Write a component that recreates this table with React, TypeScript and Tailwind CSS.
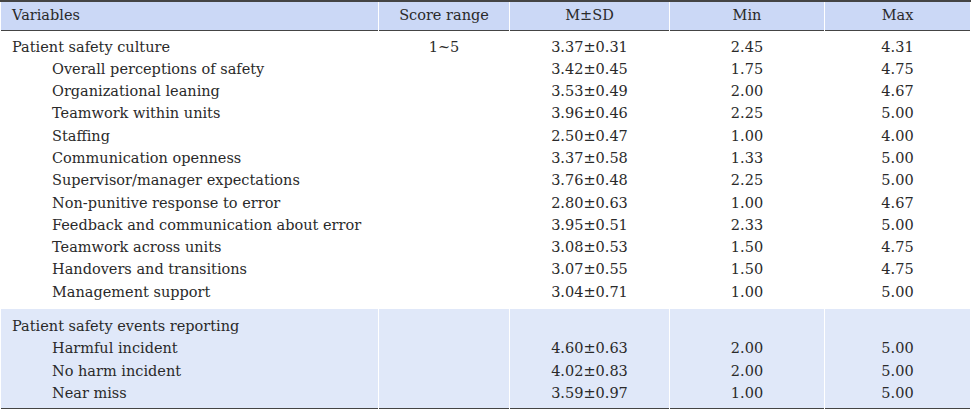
import React from "react";

type Row = { label: string; sub?: boolean; range?: string; msd?: string; min?: string; max?: string };

const culture: Row[] = [
  { label: "Patient safety culture", range: "1~5", msd: "3.37±0.31", min: "2.45", max: "4.31" },
  { label: "Overall perceptions of safety", sub: true, msd: "3.42±0.45", min: "1.75", max: "4.75" },
  { label: "Organizational leaning", sub: true, msd: "3.53±0.49", min: "2.00", max: "4.67" },
  { label: "Teamwork within units", sub: true, msd: "3.96±0.46", min: "2.25", max: "5.00" },
  { label: "Staffing", sub: true, msd: "2.50±0.47", min: "1.00", max: "4.00" },
  { label: "Communication openness", sub: true, msd: "3.37±0.58", min: "1.33", max: "5.00" },
  { label: "Supervisor/manager expectations", sub: true, msd: "3.76±0.48", min: "2.25", max: "5.00" },
  { label: "Non-punitive response to error", sub: true, msd: "2.80±0.63", min: "1.00", max: "4.67" },
  { label: "Feedback and communication about error", sub: true, msd: "3.95±0.51", min: "2.33", max: "5.00" },
  { label: "Teamwork across units", sub: true, msd: "3.08±0.53", min: "1.50", max: "4.75" },
  { label: "Handovers and transitions", sub: true, msd: "3.07±0.55", min: "1.50", max: "4.75" },
  { label: "Management support", sub: true, msd: "3.04±0.71", min: "1.00", max: "5.00" },
];

const reporting: Row[] = [
  { label: "Patient safety events reporting" },
  { label: "Harmful incident", sub: true, msd: "4.60±0.63", min: "2.00", max: "5.00" },
  { label: "No harm incident", sub: true, msd: "4.02±0.83", min: "2.00", max: "5.00" },
  { label: "Near miss", sub: true, msd: "3.59±0.97", min: "1.00", max: "5.00" },
];

const line = "h-[22.3px] leading-[22.3px] whitespace-nowrap";

// one body section = one table row, each cell stacks its lines
function Section({ rows, className }: { rows: Row[]; className: string }) {
  const col = (key: "range" | "msd" | "min" | "max") =>
    rows.map((r, i) => (
      <div key={i} className={line}>
        {r[key] ?? "\u00a0"}
      </div>
    ));
  return (
    <tr className={className}>
      <td className="border-x border-white pl-[11px] text-left">
        {rows.map((r, i) => (
          <div key={i} className={`${line} ${r.sub ? "pl-[40px]" : ""}`}>
            {r.label}
          </div>
        ))}
      </td>
      <td className="border-x border-white text-center">{col("range")}</td>
      <td className="border-x border-white text-center">{col("msd")}</td>
      <td className="border-x border-white text-center">{col("min")}</td>
      <td className="border-x border-white text-center">{col("max")}</td>
    </tr>
  );
}

export default function App() {
  return (
    <div className="h-[409px] w-[971px] bg-white font-['DejaVu_Serif',serif] text-[#2a2a2a]">
      <table className="w-[970px] table-fixed border-collapse text-[14.5px]">
        <colgroup>
          <col className="w-[378px]" />
          <col className="w-[131px]" />
          <col className="w-[160px]" />
          <col className="w-[155px]" />
          <col className="w-[146px]" />
        </colgroup>
        <thead>
          <tr className="h-[29px] border-t-2 border-b border-t-[#444] border-b-[#444] bg-[#cbd8f6]">
            <th className="border-x border-white pl-[11px] text-left font-normal">Variables</th>
            <th className="border-x border-white text-center font-normal">Score range</th>
            <th className="border-x border-white text-center font-normal">M±SD</th>
            <th className="border-x border-white text-center font-normal">Min</th>
            <th className="border-x border-white text-center font-normal">Max</th>
          </tr>
        </thead>
        <tbody>
          <Section rows={culture} className="bg-white [&>td]:pt-[5px] [&>td]:pb-[6px]" />
          <Section rows={reporting} className="border-b border-b-[#444] bg-[#e0e8f9] [&>td]:pt-[6px] [&>td]:pb-[4px]" />
        </tbody>
      </table>
    </div>
  );
}
